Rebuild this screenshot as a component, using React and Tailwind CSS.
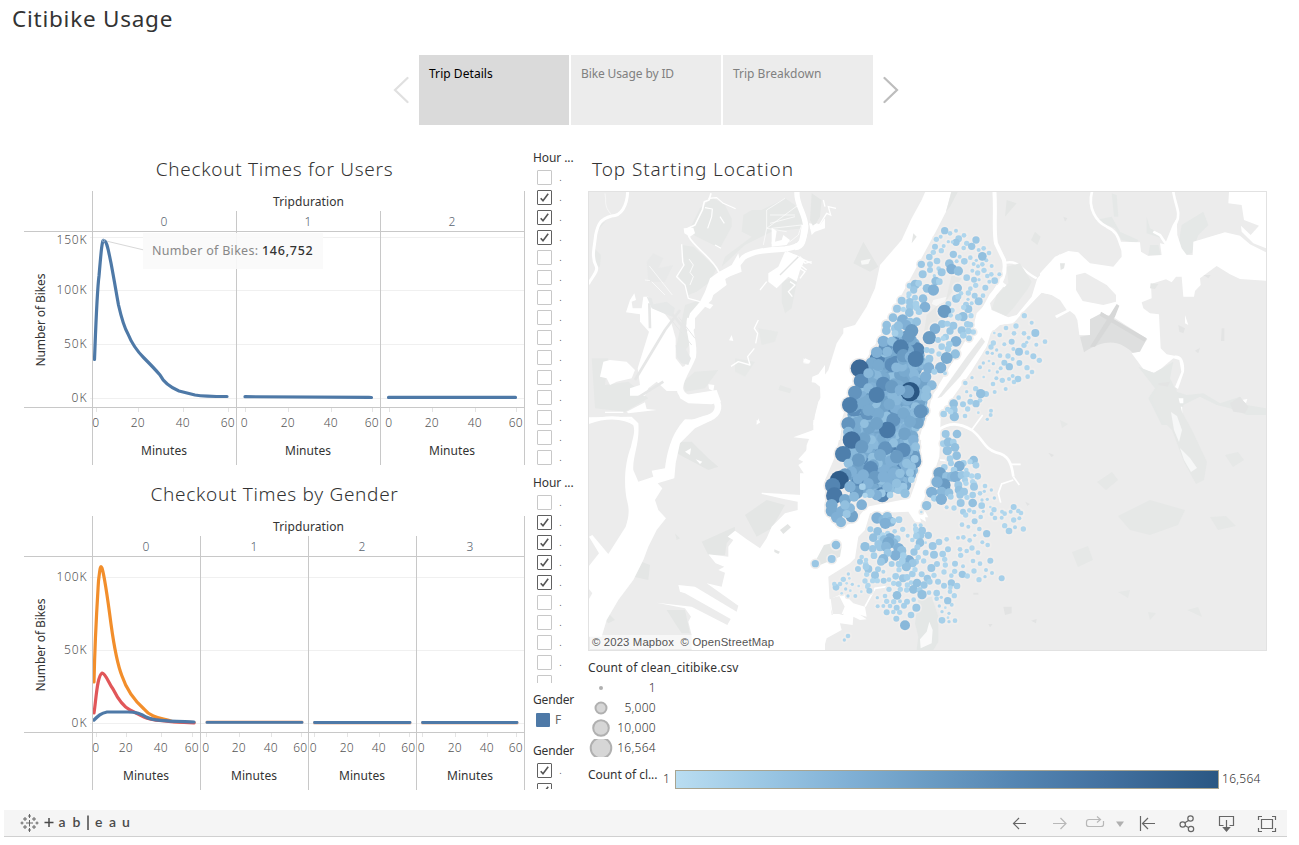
import React from "react";

const RAMP = [
  [185, 221, 241], [175, 214, 237], [165, 207, 233], [155, 199, 228], [146, 192, 223],
  [137, 184, 218], [128, 176, 213], [121, 170, 207], [114, 163, 201], [106, 155, 195],
  [99, 148, 190], [91, 140, 184], [84, 133, 178], [78, 127, 172], [72, 120, 166],
  [67, 113, 159], [61, 106, 152], [55, 100, 145], [48, 93, 138], [42, 87, 131],
];

function ramp(t) {
  const i = Math.max(0, Math.min(19, Math.round(t * 19)));
  return `rgb(${RAMP[i].join(",")})`;
}

// Stations are stored as x, y, radius in thirds of a pixel from the group's origin.
const UPTOWN = `434,92,11 450,100,7 468,92,6 492,106,7 476,116,10 468,127,11 445,125,5 457,126,5 422,110,6 409,118,8 405,140,9 431,138,6 424,152,8 500,130,8 491,144,7 515,139,11 528,120,11 551,145,7 536,150,6 567,159,7 559,181,6 547,169,13 400,157,8 388,171,10 411,183,10 364,193,11 390,193,9 390,210,9 416,206,7 425,217,12 368,223,12 403,227,5 460,163,11 479,170,6 493,184,10 511,173,7 529,181,5 470,184,6 448,191,13 455,207,16 475,213,14 521,192,6 534,199,6 547,193,7 517,212,6 533,219,8 552,211,8 575,198,6 598,223,6 562,228,7 574,223,7 584,242,10 568,245,6 500,233,10 522,239,9 537,239,5 527,256,8 556,263,9 473,264,13 511,266,7 505,279,8 483,280,7 549,287,7 524,287,9 536,304,12 504,298,5 515,310,6 498,314,9 468,296,12 475,290,9 505,327,12 491,322,8 445,312,9 456,331,8 433,334,20 452,346,7 489,350,14 475,352,10 513,347,8 502,373,10 511,374,9 520,396,8 505,393,10 507,415,9 485,391,12 490,406,10 460,377,12 426,372,12 442,371,9 405,386,16 388,413,20 450,393,11 437,411,10 468,424,16 414,420,9 425,440,10 448,433,10 444,447,10 430,415,8 466,462,14 440,474,18 417,462,8 395,453,9 380,450,9 388,476,12 383,490,12 422,503,17 386,504,17 403,515,9 435,520,6 377,530,17 395,556,15 379,570,14 376,590,14 329,257,9 346,253,14 356,250,10 407,243,13 418,245,10 381,265,13 400,270,17 341,270,11 369,296,13 327,282,8 325,290,6 345,293,9 305,302,12 323,305,8 291,326,12 310,328,8 330,320,12 330,305,11 350,323,10 375,321,16 357,335,10 348,312,10 328,338,13 279,353,13 308,360,17 330,365,12 350,365,13 260,375,13 259,392,13 285,385,12 318,375,16 335,392,20 325,408,20 295,378,14 297,400,13 285,400,10 250,424,17 275,424,14 302,442,24 230,457,17 262,455,15 310,467,20 330,470,16 347,477,24 215,490,18 235,495,18 179,505,27 183,543,22 205,520,15 165,578,21 205,565,15 250,552,22 275,560,20 230,585,24 150,615,24 345,545,17 362,634,21 280,660,21 262,690,25 230,670,19 145,672,21 152,720,24 145,697,15 322,600,16 330,575,29 323,575,20 300,570,16 190,610,18 205,630,18 310,640,18 330,665,18`;
const QUEENS = `673,347,8 695,368,6 648,378,8 618,384,7 583,399,4 599,405,7 642,400,7 672,400,7 686,413,6 706,399,12 735,425,7 709,434,6 635,425,9 680,427,5 672,436,8 613,433,6 580,429,8 573,441,8 590,450,5 562,458,6 577,460,5 657,455,12 640,447,6 681,458,7 700,469,9 718,481,8 600,467,7 624,468,8 638,477,6 550,489,5 567,483,4 540,502,6 580,491,5 613,488,9 628,500,11 658,489,9 681,503,8 696,516,7 683,530,7 654,537,10 638,528,6 642,546,7 602,505,6 592,516,5 568,512,4 551,531,4 516,533,5 589,535,6 607,541,8 627,537,6 579,552,7 617,567,6 584,576,6 496,549,7 527,566,8 558,582,9 542,581,14 500,575,5 512,587,5 540,601,7 528,611,11 511,605,9 489,613,9 461,611,13 476,593,7 503,627,8 535,638,4 495,648,7 461,630,12 463,650,14 443,628,8 431,642,10 452,635,8 573,632,6 572,645,6 562,658,5 437,702,12 471,702,13`;
const DOWNTOWN = `145,5,15 155,30,26 185,50,20 129,72,24 175,90,20 145,100,14 212,115,22 225,142,20 205,160,16 190,135,17 155,125,16 135,135,20 118,150,28 170,187,20 150,170,17 98,167,23 103,197,25 135,210,18 162,200,15 95,225,18 95,243,18 125,243,16 110,262,17 123,277,15 155,258,19 150,235,15 140,252,12 185,224,16 135,225,14 255,55,21 240,75,18 310,60,22 290,80,20 340,30,16 347,50,13 344,87,12 335,110,13 330,128,12 320,100,14 334,149,10 310,170,12 295,180,12 315,190,14 290,160,14 270,195,10 262,172,15 245,190,12 230,195,16 210,190,14 187,170,10 195,196,8 280,130,17 250,140,17 300,130,14`;
const BROOKLYN = `430,41,10 445,36,14 460,36,10 465,52,13 442,62,14 470,77,13 450,86,10 453,100,9 521,90,13 528,106,10 510,95,8 490,100,10 478,108,16 499,120,7 462,120,10 433,112,10 419,130,19 440,140,14 455,140,15 467,140,17 432,165,20 411,156,17 425,185,15 395,187,17 447,188,13 403,205,10 424,208,17 380,227,14 440,232,6 462,234,8 364,246,4 485,135,12 500,133,10 515,138,8 533,139,10 495,150,9 498,160,8 518,155,8 524,160,7 522,170,12 475,165,12 477,180,13 492,185,12 480,195,11 452,200,9 482,219,12 501,202,8 518,195,10 518,219,13 540,190,7 553,184,5 555,168,7 574,180,5 583,204,5 562,208,5 546,210,5 545,227,10 571,231,4 582,239,8 575,252,6 550,244,5 542,261,7 508,241,7 522,246,7 489,245,9 497,255,8 524,274,9 486,284,7 505,290,6 538,297,7 560,311,11 524,316,5 547,337,6 563,345,7 606,245,6 614,251,7 605,263,6 585,264,7 632,245,6 641,231,9 655,243,7 663,249,7 658,265,6 641,270,8 645,292,6 627,303,10 614,287,8 670,297,8 231,264,17 250,270,15 262,260,14 272,275,15 256,280,17 280,272,9 297,269,10 211,298,9 233,304,13 220,323,13 240,323,8 248,315,8 263,310,8 284,304,7 308,298,8 345,286,6 362,286,6 347,297,8 366,302,12 349,305,8 361,316,12 349,318,10 385,316,11 323,317,6 270,325,16 292,326,10 252,330,14 195,350,14 218,356,11 235,342,12 240,352,12 280,340,15 265,338,18 258,350,15 296,355,16 305,362,14 286,376,16 263,368,12 250,387,15 222,377,10 337,330,7 360,338,13 377,338,4 398,348,12 417,336,10 440,328,7 444,358,9 474,323,6 490,322,7 509,331,7 480,358,7 500,363,7 516,354,8 482,376,8 534,368,7 352,352,9 342,366,11 377,368,9 402,374,12 428,372,10 355,382,8 371,393,8 348,395,9 326,392,17 338,400,12 319,410,14 310,377,10 307,392,10 275,402,9 297,402,10 243,395,12 234,418,9 250,425,6 185,381,7 180,395,9 174,417,9 198,390,7 197,402,8 205,417,12 198,410,10 200,433,8 225,436,12 218,452,8 232,452,8 195,453,8 251,452,9 267,449,7 287,439,10 297,419,8 309,445,12 321,442,10 337,432,10 345,419,8 365,433,9 382,445,11 394,414,12 411,402,9 434,388,8 436,405,8 465,401,9 489,409,6 519,393,7 540,401,7 571,392,9 464,424,8 432,426,8 454,437,7 402,436,8 487,433,11 502,438,8 522,423,8 558,420,6 576,429,6 555,440,5 537,449,8 605,445,9 414,455,9 432,467,9 454,459,11 471,468,10 333,458,7 351,459,13 372,465,11 389,455,9 281,460,8 296,462,9 322,465,8 301,478,8 320,480,8 340,478,13 359,480,9 366,494,14 387,488,7 410,489,10 424,502,5 410,506,7 443,512,11 463,497,8 450,485,7 451,473,7 267,478,8 291,496,13 255,498,7 232,503,5 260,514,8 281,515,8 300,514,6 321,515,9 341,509,7 233,529,6 250,528,6 270,528,7 290,533,9 312,527,9 349,533,12 260,547,9 280,546,7 299,547,8 333,555,10 289,566,9 315,586,15 426,571,10 447,575,5 465,572,7 444,563,4 447,550,5 426,545,5 436,533,4 455,524,6 418,528,5 204,466,8 201,471,6 208,482,9 184,485,4 176,468,4 166,498,6 157,463,5 144,498,5 137,477,5 151,482,4 145,432,5 148,445,4 130,448,8 140,460,4 125,490,4 108,472,10 103,462,7 120,462,7 144,618,7 133,630,5 108,345,13 95,387,12 46,401,11`;

const parse = (s, ox, oy) =>
  s.split(" ").map((p) => {
    const [x, y, r] = p.split(",").map(Number);
    return { x: ox + x / 3, y: oy + y / 3, r: r / 3 };
  });

function midtown() {
  const poly = [
    [240, 455], [300, 410], [345, 420], [370, 490], [345, 520], [385, 560], [372, 640],
    [345, 700], [345, 800], [320, 860], [260, 885], [195, 880], [150, 830], [145, 700],
    [160, 600], [190, 520],
  ];
  const inside = (x, y) => {
    let c = false;
    for (let i = 0, j = poly.length - 1; i < poly.length; j = i++) {
      const [xi, yi] = poly[i];
      const [xj, yj] = poly[j];
      if (yi > y !== yj > y && x < ((xj - xi) * (y - yi)) / (yj - yi) + xi) c = !c;
    }
    return c;
  };
  let seed = 11;
  const rnd = () => {
    seed = (seed * 16807) % 2147483647;
    return seed / 2147483647;
  };
  const out = [];
  for (let y = 415; y < 890; y += 14) {
    for (let x = 140; x < 395; x += 14) {
      const px = x + rnd() * 12;
      const py = y + rnd() * 12;
      const r = 13 + rnd() * 6 + (rnd() > 0.88 ? 5 : 0);
      if (inside(px, py)) out.push({ x: 800 + px / 3, y: 200 + py / 3, r: r / 3, k: rnd() });
    }
  }
  return out.sort((a, b) => a.k - b.k);
}

const STATIONS = [
  ...midtown(),
  ...parse(UPTOWN, 800, 200),
  ...parse(QUEENS, 800, 200),
  ...parse(DOWNTOWN, 800, 430),
  ...parse(BROOKLYN, 800, 430),
];

function BikeMap() {
  const s = "scale(.33333)";
  return (
    <svg className="block h-[460px] w-[679px]" viewBox="588 191 679 460">
      <rect x="588" y="191" width="679" height="460" fill="#ececec" />
      {/* north-west: Passaic, Hackensack, Newark airport */}
      <g transform={`translate(585 185) ${s}`} fill="none" stroke="#fff" strokeLinejoin="round">
        <g fill="#e6e8e7" stroke="none">
          <path d="M375 45 385 40 420 60 440 100 440 125 405 190 325 150 315 130 345 70Z" />
          <path d="M290 180 325 185 395 250 375 290 335 320 310 330 280 270 298 235Z" />
          <path d="M475 90 500 75 530 75 600 40 630 60 650 90 655 130 560 140 480 180 410 245 420 215 500 155 470 140Z" />
          <path d="M690 35 705 90 690 125 680 80Z" />
          <path d="M45 115 60 110 70 100 35 140ZM28 190 48 210 45 245 32 245Z" />
          <path d="M185 230 205 205 235 220 220 250 265 240 240 290 190 290Z" opacity=".6" />
          <path d="M20 520 70 520 60 600 130 590 190 640 120 680 30 670Z" />
          <path d="M300 360 345 345 310 410 320 470 290 510 275 480Z" />
          <path d="M330 560 400 555 360 610 300 620 295 590Z" />
          <path d="M590 290 640 270 620 370 600 385 590 350Z" />
          <path d="M520 430 580 440 570 470 530 480ZM450 520 510 530 480 575 450 560Z" opacity=".7" />
          <path d="M585 600 620 612 615 625 580 615Z" />
        </g>
        <path strokeWidth="9" d="M128 20C126 65 108 92 80 93C45 102 38 120 32 150C28 190 18 215 34 245C40 258 22 275 10 297" />
        <path strokeWidth="1.500" d="M60 25C65 50 55 60 78 88" />
        <path strokeWidth="5" d="M378 25 372 45 358 50 352 75 330 120 305 132 312 155C325 185 385 220 402 262" />
        <path strokeWidth="3.500" d="M370 40 395 38 415 55 452 71M360 68 382 72 380 95 368 130M405 95 418 115M390 180 408 190" />
        <path fill="#fff" stroke="none" d="M296 130 325 128 330 145 315 155 298 145Z" />
        <path strokeWidth="4" d="M290 178 293 230 297 240 275 275 300 300 310 340 345 350" />
        <path strokeWidth="2.500" d="M312 222 325 240 315 262 325 275 315 300" />
        <path strokeWidth="16" d="M636 20C632 60 665 90 662 130C655 175 650 185 600 192C540 195 500 200 475 218C450 250 440 262 410 280" />
        <path strokeWidth="20" d="M660 120C655 170 650 185 630 186" />
        <path fill="#fff" stroke="none" d="M460 205 440 240 400 262 375 280 360 320 345 350 315 385 303 425 310 450 330 430 330 400 365 360 380 345 385 330 425 300 420 280 470 260Z" />
        <path strokeWidth="20" d="M316 400C308 440 330 470 323 515C310 550 285 580 284 610C290 650 330 642 390 640C410 670 395 695 360 702L300 722" />
        <path fill="#fff" stroke="none" d="M280 610 300 630 395 615 408 650 380 658 310 655 285 640Z" />
        <path fill="#fff" stroke="none" d="M148 325 153 345 140 350 143 370 170 370 175 335 190 335 200 365 238 385 258 410 272 460 272 520 292 545 318 540 290 575 280 618 245 618 215 590 190 610 180 632 135 632 135 610 165 600 158 550 192 440 165 410 165 388 123 382 135 345Z" />
        <path stroke="#e6e7e7" strokeWidth="8" d="M150 585 240 435 285 375M195 430 193 355M240 360 305 440M155 640 235 590" />
        <path stroke="#e6e7e7" strokeWidth="3" d="M255 400 320 480M280 395 330 460" />
        <path fill="#e6e8e8" stroke="none" d="M185 335 200 340 205 358 245 350 270 370 262 395 235 385 200 370ZM272 480 300 490 318 520 310 540 290 535 275 515Z" />
        <path fill="#fff" stroke="none" d="M55 530 75 525 125 530 150 555 140 580 95 590 75 600 65 580 45 575Z" />
        <path stroke="none" fill="#fff" d="M125 680 180 652 185 672 215 675 130 685ZM60 680H115V684H60Z" />
        <path strokeWidth="10" d="M10 712C60 695 110 690 155 720" />
        <path strokeWidth="2" d="M193 243 262 330M200 290 240 330M180 285 195 287M545 75 600 40M545 75V130L640 60M555 90H630M555 115 630 95M560 130 650 120M535 180 545 130 605 140M570 150 560 175 615 170 640 150 650 120" />
        <path fill="#fff" stroke="none" d="M560 128 575 138 570 170 590 165 595 150 615 165 605 180 560 185ZM672 115 705 120 720 100 720 130 690 140 680 150ZM550 265 580 245 600 200 635 210 660 225 645 255 635 290 610 275 575 310 550 290Z" />
        <path strokeWidth="4" d="M525 315 545 290M605 200 680 235M640 235 665 255M615 290 630 300 610 320 622 335M520 405 508 430 518 445 512 475M508 490 488 515 495 540 460 530 438 544" />
        <path stroke="#e4e5e5" strokeWidth="4" d="M585 270 640 215" />
        <path fill="#fff" stroke="none" d="M440 450 445 468 432 466ZM660 520 677 527 672 536 655 530ZM515 705 525 710 515 720ZM370 598 388 600 385 618 372 612ZM360 350 385 360 375 372 360 365Z" />
        <path fill="#fff" stroke="none" d="M720 540 700 568 682 575 680 592 705 595 715 625 700 650 690 690 685 720H720Z" />
      </g>
      {/* Newark Bay and New Jersey piers */}
      <g transform={`translate(585 420) ${s}`} fill="#fff">
        <path fill="#e4e6e5" d="M480 285 545 240 600 255 560 325 515 350ZM350 365 450 320 450 340 425 370 420 405 370 405ZM280 65 320 65 370 115 400 140 370 150 275 100ZM170 425 195 435 190 480 145 470ZM245 570 300 570 315 640 290 640 270 610ZM70 580 90 600 70 610 60 600ZM270 340 285 355 275 360Z" />
        <path d="M10 5C60-8 120-10 138 0C155 30 145 45 138 80C118 130 115 200 128 250C135 280 128 300 122 320L70 402 22 345 12 350 42 400 10 440V505L22 520 10 540V650H50L65 600 100 540 145 480 175 420 190 380 215 330 243 295 220 270 210 240 232 205 218 190 268 175 272 130 285 70 330 25 382 0 300-2C270 30 250 70 240 145L200 152 205 170 160 185 145 150C142 110 165 70 160 10L140-10 10-8Z" />
        <path d="M685 0 685 30 625 52 680 58 665 90 640 118 655 125 640 135 660 165 650 185 650 225 530 218 530 222 600 238 638 245V270L600 280 560 320 545 355 525 385 485 358 450 332 428 350 445 360 430 380V410L370 403 392 430 418 440 400 450 420 458 410 500 365 490 460 557 455 575 330 500 280 495 285 515 300 520 437 597 427 615 320 560 215 548 300 565 318 590 310 605 320 645V690H720V0Z" />
        <path fill="#e3e5e4" d="M585 330 608 312 618 322 595 342ZM568 388 585 395 580 402 568 396Z" />
        <path fill="#fff" d="M300 95 318 85 315 105ZM332 118 352 125 345 132ZM520-5 525 8 515 12Z" />
      </g>
      {/* Hudson, Harlem and East rivers */}
      <g transform={`translate(800 200) ${s}`} fill="#fff">
        <path d="M378-30 365 0 335 55 305 120 240 195 225 265 200 320 165 375 130 385 130 400 110 430 85 510 70 530 35 540 60 560 62 610 45 660 40 720H120L128 650 150 580 185 500 240 410 280 330 340 220 410 90 438 35 455-30Z" />
        <path fill="#e4e6e5" d="M190 125 235 200 210 215 160 190ZM35-20 65 0 60 50 40 80 30 60ZM455-27H475L450 20 438 35ZM340 100 350 110 335 130ZM620 0 650 10 615 50ZM705 95 722 110 712 135 693 120Z" />
        <path d="M182 182 212 176 205 192 185 194ZM10 475 28 485 22 492 10 490Z" opacity=".7" />
        <path fill="none" stroke="#fff" strokeWidth="12" d="M583-30C588 40 580 90 588 130L612 180C620 220 605 250 575 285L550 330" />
        <path fill="none" stroke="#fff" strokeWidth="7" d="M618 188C660 180 665 215 710 235" />
        <path d="M780 162 735 210 712 235 695 290 650 345 625 352 575 330 570 310 610 260 625 268 630 262 612 250 600 235 560 310 530 340 520 380 480 450 425 540 395 590 385 640 355 720H420L422 650 460 590 510 520 560 440 572 400 600 375 640 370 675 330 725 278 780 288Z" />
        <path fill="#e6e8e7" d="M620 200 660 190 695 245 685 265 640 325 618 348 575 328 590 285 625 250Z" />
        <path fill="#e8e9e9" d="M425 590 412 595 500 470 545 412 555 425 480 530Z" />
        <path fill="none" stroke="#fff" strokeWidth="7" d="M0 20 20 70 10 120" />
        <path fill="none" stroke="#fff" strokeWidth="4" d="M0 170 15 190 35 185M0 205 15 215 0 235M30 85 50 72 58 75 80 40 92 45 85 20 108 25M75 20 70 0" />
        <path fill="#e2e4e3" d="M455 225 485 235 440 300 430 370 385 445 365 440 380 345 440 290Z" opacity=".6" />
        <path d="M400 300 440 290 435 305 410 318 395 312Z" opacity=".6" />
      </g>
      <g transform={`translate(800 430) ${s}`} fill="#fff">
        <path d="M0 130 15 130 20 45 38 0 125-5 105 80 75 150 75 240 110 290 160 280 200 230 330 205 350 150 362 60 365-5H422L418 80 395 150 365 225 385 262 375 262 378 275 360 265 365 280 345 275 325 245 210 250 195 300 175 320 165 385 150 400 85 440 88 500 95 555 130 555 135 520 160 540 200 568 180 570 160 560 158 585 120 580 125 600 80 625 70 660H0Z" />
        <path fill="#e3e6e5" d="M40 405 72 345 95 340 125 350 120 380 60 405Z" />
        <path fill="none" stroke="#fff" strokeWidth="8" d="M415 0C450-25 480-20 515 0C550 25 550 55 590 68C625 75 635 100 640 140" />
        <path fill="none" stroke="#fff" strokeWidth="5" d="M632 103H662M640 140 658 165M640 150 605 162 595 190 602 218M515 0 548-45M420 90 440 92M195 530 225 475 260 470" />
        <path d="M85 510 130 490 160 520 195 530 200 560 150 545 100 560Z" />
        <path fill="#ececec" d="M92 505 118 498 134 530 125 552 98 552Z" />
        <path fill="#e4e7e6" d="M345 580 355 510 395 500 415 560 415 635 400 660 350 660 355 620Z" />
        <path d="M360 628 380 605 388 575 398 600 395 640 362 655Z" opacity=".8" />
        <path fill="#e2e3e3" d="M610 530 635 530 635 550 615 555ZM693 572 710 567 708 580ZM676 215 690 222 682 228ZM745 68 762 75 755 82ZM565 582 578 582 570 592ZM520 488H535V494H520Z" />
      </g>
      {/* Flushing Bay, Rikers Island, LaGuardia */}
      <g transform={`translate(1040 185) ${s}`} fill="#fff">
        <path fill="#e5e8e7" d="M165 105 215 95 240 140 295 165 290 175 245 165 225 130ZM215 25 230 30 235 95 222 95ZM320 95 330 130 360 145 365 160 320 145ZM425 120 490 80 505 120 475 150 455 205 435 210 415 180ZM355 180 362 210 325 210 330 180Z" />
        <path fill="none" stroke="#fff" strokeWidth="8" d="M156 20C142 70 170 110 200 125C235 140 235 165 248 195M400 20C405 60 425 85 408 115L380 180 360 150 340 140" />
        <path d="M0 265 45 215 85 198 115 202 150 235 220 245 245 215 243 170 300 172 303 200 325 213 365 210 360 175 375 178 398 120 410 100 412 150 425 190 440 210 458 210 460 170 500 158 555 142 600 152 630 178 678 202V287L600 282 570 268 530 243 480 280 482 300 465 318 462 335H430L425 275H408L395 292 378 283 340 295 333 300 335 340 305 352 310 370 330 385 357 388 362 490 380 508 403 512C425 508 435 530 432 560L414 612 405 606 424 560 418 525 400 520 365 550 342 563 312 555 275 505 295 500 322 462 210 390 150 402 155 450H118L112 405 105 390 90 378 50 400 45 392 80 375 60 345 35 330 0 322Z" />
        <path fill="#ececec" d="M108 270 135 263 200 300 228 330 228 350 190 360 128 348 108 315Z" />
        <path fill="#e4e6e5" d="M60 235 75 235 72 250 62 255ZM332 295 355 297 345 312 330 310Z" />
        <path fill="#dedfdf" d="M120 455 150 450V403L187 383 320 462 300 500 278 503C240 468 200 458 132 502Z" />
        <path fill="#d7d8d8" d="M150 485 230 357 238 362 225 395 165 485ZM183 380 320 460 313 470 180 392Z" />
        <path d="M567 20H678V190L640 175 605 140 603 122 632 150 657 122 612 105 605 60 565 55Z" />
        <path fill="#e5e8e7" d="M295 545 342 564 400 530 390 580 410 620 440 630 490 625 540 655 600 635 620 660 678 670V690H620L570 670 530 660 480 635 430 660 420 720H365L325 640 345 610Z" />
        <path d="M415 640H430V655H415ZM421 665H427V720H421ZM605 645 622 642 618 655ZM435 390 445 420 435 415Z" />
        <path fill="#e3e4e4" d="M355 595 390 590 380 612 355 615ZM545 430H553V468H543ZM415 420 435 430 430 445 418 440ZM465 497 480 488 475 505ZM570 655 600 635 625 665 615 685 580 680ZM70 95 82 100 75 110ZM490 270 512 270 505 280Z" />
      </g>
      {/* Queens parks */}
      <g fill="#e6e8e7">
        <path d="M1152 400 1158 385 1176 388 1182 412 1192 430 1207 462 1204 480 1196 484 1184 462 1172 430 1160 418Z" />
        <path fill="#f6f7f7" d="M1171 412 1177 416 1182 430 1179 442 1174 430ZM1180 448 1190 458 1197 468 1191 472 1184 460Z" />
        <path d="M1118 516 1150 500 1185 510 1178 525 1150 535 1130 530ZM1072 552 1088 546 1093 560 1078 567ZM1097 482 1112 472 1118 480 1106 490ZM1225 455 1238 452 1244 460 1233 467ZM1210 517 1226 516 1236 526 1218 530ZM1118 592 1130 590 1128 598ZM1187 610 1198 607 1202 617ZM1148 612 1156 613 1150 620ZM1060 420 1068 424 1062 428Z" />
      </g>
      <g fill="#f0eeed">
        {STATIONS.map((p, i) => (
          <circle key={i} cx={p.x} cy={p.y} r={p.r + 1.6} />
        ))}
      </g>
      {STATIONS.map((p, i) => (
        <circle key={i} cx={p.x} cy={p.y} r={p.r} fill={ramp((p.r / 9.7) ** 2)} />
      ))}
      <rect x="588.5" y="191.5" width="678" height="459" fill="none" stroke="#e2e2e2" />
    </svg>
  );
}

function Label({ x, y, w, anchor = "middle", className = "fill-[#555] font-light", children }) {
  return (
    <text x={x} y={y} textAnchor={anchor} textLength={w} className={className}>
      {children}
    </text>
  );
}

function Facets({ columns, yTicks, xLabels, children }) {
  const n = columns.length;
  const w = 432 / n;
  const edges = Array.from({ length: n + 1 }, (_, i) => 68.5 + i * w);
  return (
    <svg className="block h-[275px] w-[505px] shrink-0 font-['Noto_Sans',sans-serif] text-[12px]" viewBox="0 0 505 275">
      {yTicks.map(([label, y, grid, w2]) => (
        <g key={label}>
          <path d={`M66 ${grid}.5H500`} stroke="#f0f0f0" />
          <Label x={62.5} y={y} w={w2} anchor="end">{label}</Label>
        </g>
      ))}
      {children}
      <g stroke="#c8c8c8" fill="none">
        <path d="M0 40.5H501M0 216.5H501" />
        {edges.map((x, i) => (
          <path key={i} d={`M${x} ${i === 0 || i === n ? 0 : 20}V274`} />
        ))}
      </g>
      <Label x={284.5} y={15} w={71} className="fill-[#333]">Tripduration</Label>
      <text transform="translate(20.500 129) rotate(-90)" textAnchor="middle" textLength="93" className="fill-[#333]">
        Number of Bikes
      </text>
      {columns.map((c, i) => (
        <g key={c}>
          <text x={68 + w * (i + 0.5)} y="35" textAnchor="middle" className="fill-[#5a6470] font-light">{c}</text>
          <Label x={68 + w * (i + 0.5)} y={264} w={46} className="fill-[#333]">Minutes</Label>
        </g>
      ))}
      {xLabels.map(([t, x], i) => (
        <g key={i}>
          <path d={`M${Math.round(x)}.5 217V221`} stroke="#e4e4e4" />
          <Label x={x - 0.3} y={236} w={t === "0" ? 6.5 : 14}>{t}</Label>
        </g>
      ))}
    </svg>
  );
}

function Box({ on, clipped }) {
  return (
    <div className="flex h-5 shrink-0 items-center pl-[4px]">
      <svg className="h-[15px] w-[15px]" viewBox="0 0 15 15" fill="none">
        <rect x=".5" y=".5" width="14" height="14" rx=".5" stroke={on ? "#606060" : "#c8c8c8"} />
        {on && <path d="M3.7 8.2 6 10.8 11.2 3.8" stroke="#555" strokeWidth="1.6" />}
      </svg>
      {!clipped && <span className="ml-[7px] text-[12px] font-light leading-5 text-[#555]">.</span>}
    </div>
  );
}

function Tab({ active, children }) {
  return (
    <div className={`h-[70px] w-[150px] px-[10px] pt-[9px] text-[12px] leading-5 ${active ? "bg-[#dadada] text-black" : "bg-[#ececec] text-[#808080]"}`}>
      {children}
    </div>
  );
}

const SIZES = [["1", 2], ["5,000", 5.5], ["10,000", 7.8], ["16,564", 10.3]];

export default function App() {
  return (
    <div className="flex h-[845px] w-[1299px] flex-col overflow-hidden bg-white font-['Noto_Sans',sans-serif] text-[12px] text-[#333]">
      <h1 className="h-[55px] pl-[12px] pt-[2px] text-[22.5px] leading-[34px] tracking-[0.76px]">Citibike Usage</h1>

      <nav className="flex h-[70px] items-center pl-[393px]">
        <svg className="mr-[10px] h-7 w-4" viewBox="0 0 16 28" fill="none" stroke="#e0e0e0" strokeWidth="2.200" strokeLinecap="round">
          <path d="M14.5 2 2 14 14.5 26" />
        </svg>
        <div className="flex gap-[2px]">
          <Tab active><span className="tracking-[0.05px]">Trip Details</span></Tab>
          <Tab><span className="tracking-[-0.12px]">Bike Usage by ID</span></Tab>
          <Tab>Trip Breakdown</Tab>
        </div>
        <svg className="ml-[10px] h-7 w-4" viewBox="0 0 16 28" fill="none" stroke="#bdbdbd" strokeWidth="2.200" strokeLinecap="round">
          <path d="M1.5 2 14 14 1.5 26" />
        </svg>
      </nav>

      <main className="mt-[20px] flex h-[646px] pl-6">
        <section className="flex w-[505px] shrink-0 flex-col">
          <div className="relative h-[325px] shrink-0">
            <h2 className="h-[46px] w-[501px] pt-[8px] text-center text-[19px] font-light leading-8 tracking-[0.7px]">Checkout Times for Users</h2>
            <Facets
              columns={["0", "1", "2"]}
              yTicks={[["150K", 53, 46, 30], ["100K", 103, 99, 30], ["50K", 157, 153, 22.5], ["0K", 211, 207, 15]]}
              xLabels={[["0", 72], ["20", 114], ["40", 159], ["60", 204], ["0", 220.5], ["20", 264], ["40", 307], ["60", 348], ["0", 365], ["20", 408], ["40", 451], ["60", 492]]}
            >
              <path d="M80 49.5 120 59" stroke="#d8d8d8" />
              <g fill="none" stroke="#4e79a7" strokeWidth="3.200" strokeLinecap="round" strokeLinejoin="round">
                <path d="M70.5 168.500C72 130 73 100 75 85C77 62 78 49 79.500 49.500C83 49.500 84 58 87 72C90 88 92 100 94.500 114C97 125 100 136 104 143C108 153 113 160 120 167C126 173 130 177 136 184C140 192 148 197 155 200L171 204C180 205.500 190 205.500 203 205.500" />
                <path d="M221 205.700 345 206.400 347.500 206.500M364.500 206.400H491.500" />
              </g>
              <circle cx="79.500" cy="49.500" r="1.200" fill="none" stroke="#9bb5d0" />
            </Facets>
            <div className="absolute left-[119px] top-[88px] h-9 w-[180px] whitespace-nowrap bg-[#fafafa]/90 pl-[9px] text-[12.5px] leading-[35px] tracking-[0.3px] text-[#888]">
              Number of Bikes: <span className="font-medium tracking-[0.75px] text-[#333]">146,752</span>
            </div>
          </div>
          <h2 className="h-[46px] w-[501px] shrink-0 pt-[8px] text-center text-[19px] font-light leading-8 tracking-[0.68px]">Checkout Times by Gender</h2>
          <Facets
            columns={["0", "1", "2", "3"]}
            yTicks={[["100K", 65, 61, 30], ["50K", 138, 134, 22.5], ["0K", 211, 207, 15]]}
            xLabels={[["0", 72], ["20", 102], ["40", 137], ["60", 168], ["0", 182], ["20", 215], ["40", 247], ["60", 276.5], ["0", 289.5], ["20", 323], ["40", 355], ["60", 384.5], ["0", 397.5], ["20", 431], ["40", 463], ["60", 492]]}
          >
            <g fill="none" strokeWidth="3.200" strokeLinecap="round" strokeLinejoin="round">
              <path stroke="#f28e2b" d="M70 166C71 120 73 90 74.500 65C76 52 76.500 48 78 52C81 62 84 85 87 108C90 130 94 150 98 160C102 172 110 184 120 193C128 203 140 202 148 205.500L170 206.500" />
              <path stroke="#e15759" d="M70 197C72 185 73 160 78 157C82 158 84 166 89 173C93 181 98 190 106 194L120 201C128 205 138 204 150 206L170 207" />
              <path stroke="#4e79a7" d="M70 204C74 200 77 197 83 196H104C112 196 118 198 122 201C130 205 145 205 170 206" />
              <path stroke="#e9b9a0" d="M183 206.200H278M290.500 206.900H386M398.500 206.900H493" />
              <path stroke="#4e79a7" strokeWidth="2.800" d="M183 206.400H278M290.500 206.500H386M398.500 206.500H493" />
            </g>
          </Facets>
        </section>

        <aside className="flex w-[59px] shrink-0 flex-col pl-[4px]">
          <div className="h-[325px]">
            <div className="h-[22px] whitespace-nowrap pt-[3px] leading-5 tracking-[-0.1px]">Hour ...</div>
            {[0, 1, 1, 1, 0, 0, 0, 0, 0, 0, 0, 0, 0, 0, 0].map((v, i) => <Box key={i} on={!!v} />)}
          </div>
          <div className="h-[213px] overflow-hidden">
            <div className="h-[22px] whitespace-nowrap pt-[3px] leading-5 tracking-[-0.1px]">Hour ...</div>
            {[0, 1, 1, 1, 1, 0, 0, 0, 0, 0].map((v, i) => <Box key={i} on={!!v} clipped={i === 9} />)}
          </div>
          <div className="mt-[7px] h-[20px] leading-[20px] tracking-[-0.15px]">Gender</div>
          <div className="flex h-[20px] items-center pl-[3px]">
            <span className="h-[14px] w-[14px] rounded-[1px] bg-[#4e79a7]" />
            <span className="ml-[5px] leading-5 text-[#666]">F</span>
          </div>
          <div className="mt-[11px] h-[19px] leading-5 tracking-[-0.15px]">Gender</div>
          <div className="h-[29px] overflow-hidden">
            <Box on />
            <Box on clipped />
          </div>
        </aside>

        <section className="w-[679px] shrink-0">
          <h2 className="h-[46px] pl-[4px] pt-[8px] text-[19px] font-light leading-8 tracking-[0.9px]">Top Starting Location</h2>
          <div className="relative">
            <BikeMap />
            <div className="absolute bottom-[2px] left-[2px] h-[14px] w-[188px] whitespace-pre bg-white/60 pl-[2px] font-['Liberation_Sans',Arial,sans-serif] text-[11.3px] leading-[14px] tracking-[0.16px] text-[#555]">© 2023 Mapbox  © OpenStreetMap</div>
          </div>
          <div className="mt-[6px] h-[21px] leading-[22px] tracking-[0.11px]">Count of clean_citibike.csv</div>
          {SIZES.map(([t, r]) => (
            <div key={t} className="flex h-5 items-center">
              <svg className="h-[18px] w-[26px]" viewBox="-13 -9 26 18">
                <circle r={r} fill={r === 2 ? "#b0b0b0" : "#d6d6d6"} stroke={r === 2 ? "none" : "#b0b0b0"} strokeWidth="2" />
              </svg>
              <span className="w-[42px] text-right font-light leading-5 tracking-[0.3px] text-[#333]">{t}</span>
            </div>
          ))}
          <div className="mt-[11px] flex h-5 items-center">
            <span className="w-[71px] pb-[8px] tracking-[-0.05px]">Count of cl...</span>
            <span className="w-[16px] pl-[4px] font-light">1</span>
            <div className="h-[19px] w-[544px] border border-[#a8a490] bg-[linear-gradient(90deg,#b9ddf1,#9bc7e4_16%,#80b0d5_32%,#6a9bc3_47%,#5485b2_63%,#4371a0_79%,#2a5783)]" />
            <span className="ml-[3px] font-light tracking-[0.3px]">16,564</span>
          </div>
        </section>
      </main>

      <footer className="ml-1 mt-[19px] flex h-[27px] w-[1283px] shrink-0 items-center border-b border-[#d0d0d0] bg-[#f5f5f5]">
        <svg className="ml-[16px] h-[18px] w-[112px]" viewBox="0 0 112 18" fill="none" stroke="#666">
          <path d="M9.500 6V12.500M6 9H13M5 3V7M3 5H7M14 3V7M12 5H16M5 11V15M3 13H7M14 11V15M12 13H16M9.500 0V4M8 2H11M9.500 14V18M8 16H11M2 7.500V10.500M.5 9H3.500M17 7.500V10.500M15.500 9H18.500" />
          <path stroke="#4a4a4a" strokeWidth="1.500" d="M29 4V13M24.500 8.500H33.500M68 1.500V16" />
          <text className="font-['Lato',sans-serif] text-[14px] font-semibold" fill="#4a4a4a" stroke="none" y="13" x="38.500 52.500 75 89 102">abeau</text>
        </svg>
        <svg className="ml-auto mr-[9px] h-[20px] w-[266px]" viewBox="1012 812 266 20" fill="none" stroke="#666" strokeWidth="1.200">
          <path d="M1026 822.500H1013.500M1019 817 1013.500 822.500 1019 828" />
          <path stroke="#b8b8b8" d="M1053 822.500H1066M1060.500 817 1066 822.500 1060.500 828" />
          <path stroke="#b8b8b8" d="M1096 825.500H1089Q1086.500 825.500 1086.500 823.500V821Q1086.500 818.500 1089 818.500H1100M1097 815.500 1100.500 818.500 1097 821.500M1095 825.500H1101Q1103.500 825.500 1103.500 823.500V820" />
          <path stroke="none" fill="#b0b0b0" d="M1116 820.500H1124L1120 826Z" />
          <path d="M1140.500 815V830M1155 822.500H1142.500M1148 817 1142.500 822.500 1148 828" />
          <circle cx="1190.500" cy="817.500" r="2.700" /><circle cx="1182.700" cy="823.500" r="2.700" /><circle cx="1191" cy="828" r="2.700" />
          <path d="M1184.500 822 1188.500 819.500M1185 824.500 1188.800 826.800" />
          <path d="M1223.500 824.500H1219.500V815.500H1233.500V824.500H1229.500M1226.500 819V829" />
          <path fill="#666" d="M1223.500 826.500H1229.500L1226.500 830Z" />
          <path d="M1261.500 818.500H1272.500V827.500H1261.500ZM1258.500 819V815.500H1262M1272 815.500H1275.500V819M1275.500 827V830.500H1272M1262 830.500H1258.500V827" />
        </svg>
      </footer>
    </div>
  );
}
